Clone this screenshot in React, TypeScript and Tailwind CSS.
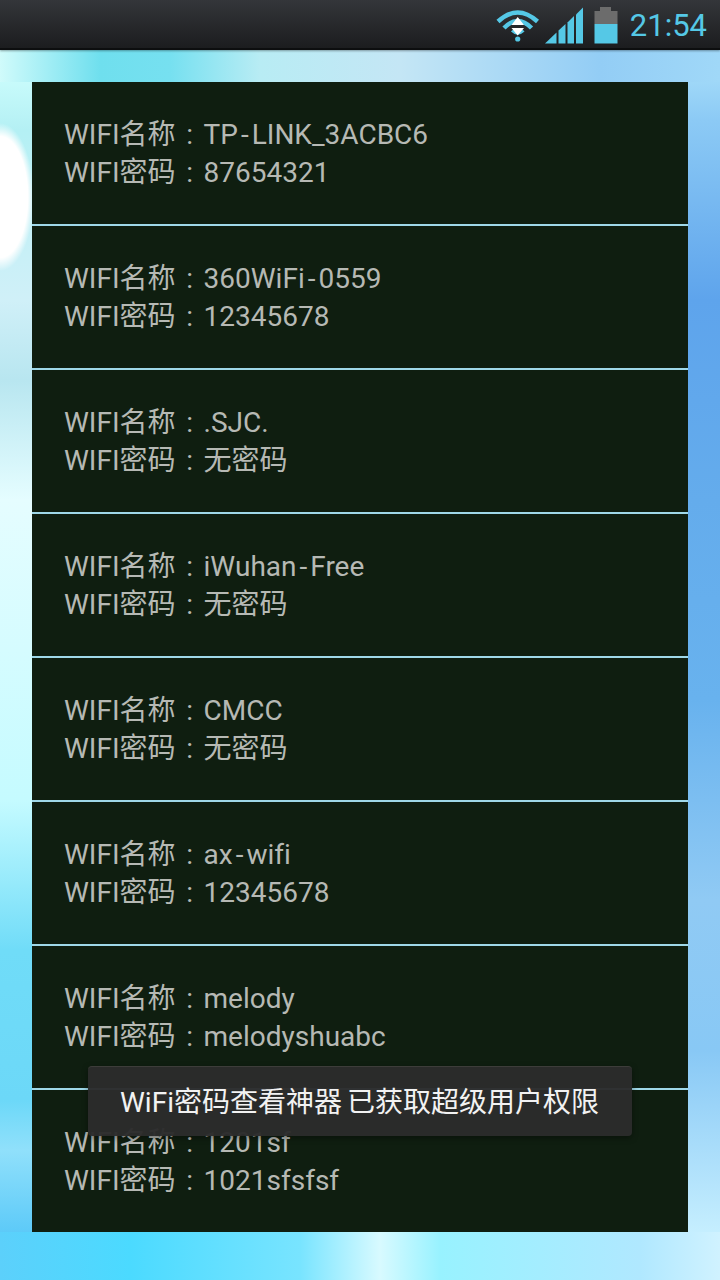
const networks = [
  { name: 'TP-LINK_3ACBC6', password: '87654321' },
  { name: '360WiFi-0559', password: '12345678' },
  { name: '.SJC.', password: '无密码' },
  { name: 'iWuhan-Free', password: '无密码' },
  { name: 'CMCC', password: '无密码' },
  { name: 'ax-wifi', password: '12345678' },
  { name: 'melody', password: 'melodyshuabc' },
  { name: '1201sf', password: '1021sfsfsf' },
];

const fontClass = "font-['Roboto','Noto_Sans_CJK_SC',sans-serif] [font-variant-ligatures:none]";

const WifiIcon = () => (
  <svg width="44" height="34" viewBox="495 8 44 34" fill="none">
    <path d="M497 21.5 Q516.7 3.5 536.5 21.5" stroke="#55c8e6" strokeWidth="4.5" />
    <path d="M503 28 Q516.7 14 530.5 28" stroke="#55c8e6" strokeWidth="4.5" />
    <path d="M511 30.5 Q516.7 36 522.5 30.5" stroke="#55c8e6" strokeWidth="3" />
    <circle cx="516.7" cy="39" r="2.6" fill="#55c8e6" />
    <path d="M516.7 17 L510.5 25 H523 Z M510.5 28 H523 L516.7 35.5 Z" fill="#ffffff" />
  </svg>
);

const SignalIcon = () => (
  <svg width="38" height="37" viewBox="544 7 38 37" fill="#55c8e6">
    <polygon points="544,43.5 555.5,43.5 555.5,32.5" />
    <polygon points="557.5,43.5 564.5,43.5 564.5,24 557.5,30.5" />
    <polygon points="566.5,43.5 573,43.5 573,16 566.5,22.5" />
    <polygon points="575,43.5 582,43.5 582,7.5 575,14.5" />
  </svg>
);

const BatteryIcon = () => (
  <svg width="24" height="38" viewBox="593 6 24 38">
    <path d="M599 7 H610 V11 H616.5 V24 H593.5 V11 H599 Z" fill="#6c6c6c" />
    <rect x="593.5" y="24" width="23" height="19.5" fill="#55c8e6" />
  </svg>
);

const StatusBar = () => (
  <div className="relative h-[50px] shrink-0 pt-[2px] flex items-center justify-end bg-gradient-to-b from-[#34363a] to-[#1c1d1f] border-b-2 border-[#0d0e0f] shadow-[0_1px_2px_rgba(0,0,0,0.35)]">
    <WifiIcon />
    <div className="ml-[5px]">
      <SignalIcon />
    </div>
    <div className="ml-[11px]">
      <BatteryIcon />
    </div>
    <span className={`ml-[12px] mr-[13px] text-[31px] leading-none text-[#55c8e6] ${fontClass}`}>21:54</span>
  </div>
);

// the hyphen is wider in the screenshot's font
const withWideHyphens = (text: string) =>
  text.split('-').map((part, i) => (
    <span key={part + i}>
      {i > 0 ? <span className="px-[3px]">-</span> : null}
      {part}
    </span>
  ));

const NetworkRow = ({ name, password }: { name: string; password: string }) => (
  <div className="h-[142px] pt-[2px] flex flex-col justify-center pl-[32px] bg-[#0f1e10] text-[28px] leading-[38px] text-[#b6b9b4]">
    <p>WIFI名称<span className="inline-block w-[28px] text-center">:</span>{withWideHyphens(name)}</p>
    <p>WIFI密码<span className="inline-block w-[28px] text-center">:</span>{password}</p>
  </div>
);

export default function App() {
  return (
    <div
      className={`relative w-[720px] h-[1280px] flex flex-col overflow-hidden [background:radial-gradient(ellipse_34px_74px_at_0px_197px,#ffffff_82%,transparent_100%),linear-gradient(90deg,#d0fbfb_0px,#6fdfee_100px,#76e0f0_170px,#b8ecf4_260px,#c4e6f5_400px,#93cdf5_600px,#a0d8f8_720px)_0_50px/100%_32px_no-repeat,linear-gradient(90deg,#5cd0fb_0px,#4bdaff_130px,#78e4ff_300px,#d8faff_380px,#98f2ff_440px,#b0e8ff_640px,#d0f2ff_720px)_0_100%/100%_48px_no-repeat,linear-gradient(180deg,#c8fbfb_80px,#b4f0f4_130px,#d0f0f8_300px,#b8e6f0_380px,#e5fdff_500px,#c5fbff_800px,#70dcf8_950px,#6cd8f8_1100px,#90e0fb_1150px,#58c8f8_1240px)_0_0/32px_100%_no-repeat,linear-gradient(180deg,#a0d8f8_80px,#8ccaf5_120px,#5ea4ec_300px,#64acec_500px,#68b2ee_700px,#90caf4_900px,#88c8f5_1050px,#c8f0ff_1240px)_100%_0/32px_100%_no-repeat,#0f1e10] ${fontClass}`}
    >
      <StatusBar />
      <div className="mt-[32px] mx-[32px] flex flex-col gap-[2px] bg-[#9fd8e8]">
        {networks.map((n) => (
          <NetworkRow key={n.name} name={n.name} password={n.password} />
        ))}
      </div>
      <div className="absolute left-[88px] top-[1066px] w-[544px] h-[70px] pt-[2px] flex items-center pl-[32px] rounded-[4px] bg-[#2b2b2b]/97 border-t border-[#3d3d3a] text-[28px] [word-spacing:-2px] text-[#f2f2f2] shadow-[0_2px_6px_rgba(0,0,0,0.4)]">
        WiFi密码查看神器 已获取超级用户权限
      </div>
    </div>
  );
}
